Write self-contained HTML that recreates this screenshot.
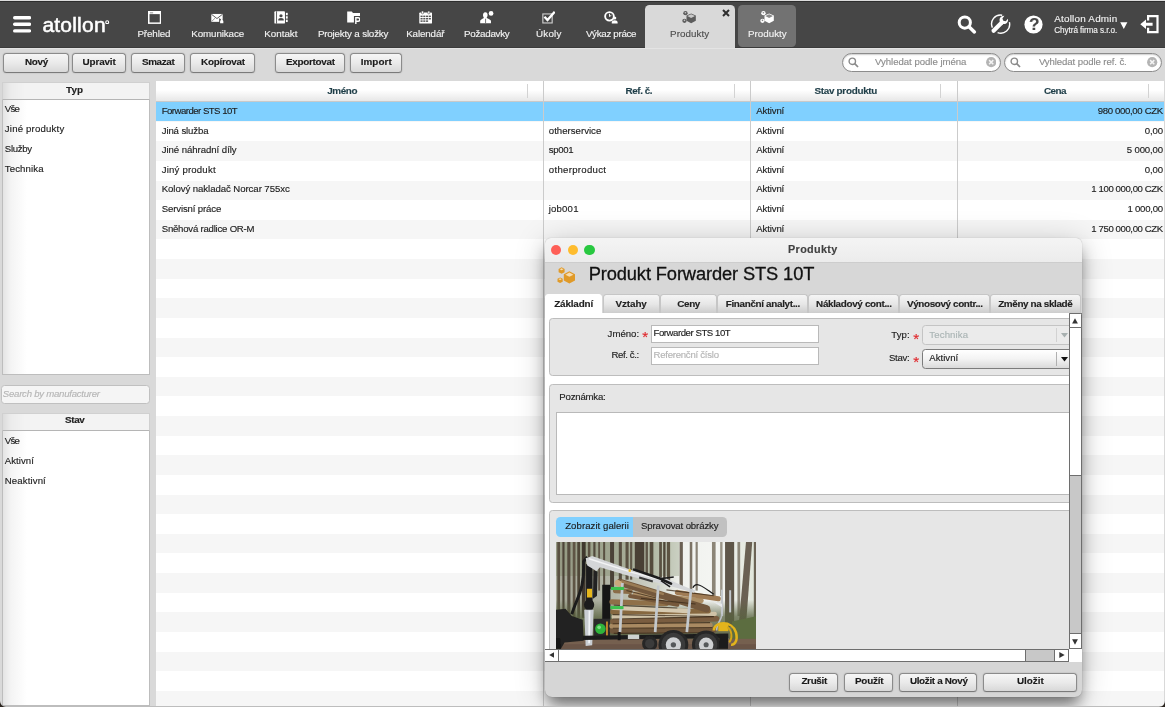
<!DOCTYPE html>
<html lang="cs">
<head>
<meta charset="utf-8">
<title>Atollon - Produkty</title>
<style>
*{box-sizing:border-box;margin:0;padding:0}
html,body{width:1165px;height:707px;overflow:hidden;background:#d9d9d9}
body{position:relative;font-family:"Liberation Sans",sans-serif;font-size:9.6px;color:#1c1c1c}
#app{position:absolute;left:0;top:0;width:1165px;height:707px;will-change:transform}
.abs{position:absolute}
.t{position:absolute;white-space:pre;line-height:1;font-style:normal;font-weight:normal;text-decoration:none;-webkit-text-stroke:0.14px}
#hdr{position:absolute;left:0;top:0;width:1165px;height:47.5px;background:linear-gradient(#dcdcdc 0,#dcdcdc 1px,#2d2d2d 1px,#2d2d2d 2px,#464646 2px);border-bottom:1px solid #3b3b3b}
#nav,#tools,#side,#user{position:absolute;left:0;top:0}
#nav svg,#user svg{position:absolute}
#tb{position:absolute;left:0;top:47.5px;width:1165px;height:34.2px;background:#d9d9d9;border-top:1px solid #e4e4e4}
.btn{position:absolute;height:20px;border:1px solid #8b8b8b;border-bottom-color:#7a7a7a;border-radius:3.5px;background:linear-gradient(#f6f6f6,#eaeaea 50%,#d8d8d8);box-shadow:0 0 1.5px rgba(0,0,0,.25)}
.sb{position:absolute;top:52.7px;height:19.2px;background:#fff;border:1px solid #8c8c8c;border-radius:9.6px;box-shadow:inset 0 1px 1.5px rgba(0,0,0,.2)}
.sb svg{position:absolute}
.ph{position:absolute;left:1.8px;width:148px;background:linear-gradient(90deg,#dcdcdc,#ececec 8px,#f3f3f3 22px);border:1px solid #d0d0d0;border-bottom:1px solid #b5b5b5}
.pl{position:absolute;left:1.8px;width:148px;background:linear-gradient(90deg,#e4e4e4,#f4f4f4 8px,#fff 24px);border:1px solid #bdbdbd;border-top:none}
#grid{position:absolute;left:155.8px;top:81.4px;width:1007.8px;height:626px;overflow:hidden;background:#fff}
#gh{position:absolute;left:0;top:0;width:100%;height:20.4px;background:linear-gradient(#fff,#fff 45%,#e7e7e7);border-bottom:1px solid #c9c9c9}
#rows{position:absolute;left:0;top:20.4px;width:100%;height:610px;background:repeating-linear-gradient(#f6f6f6 0,#f6f6f6 19.63px,#fff 19.63px,#fff 39.26px)}
.sel{position:absolute;left:0;top:0;width:100%;height:19.63px;background:#80d0ff}
.vl{position:absolute;top:0;width:1px;height:100%;background:#cbcbcb}
.sep{position:absolute;top:3px;width:1px;height:14px;background:#d3d3d3}
#dlg{position:absolute;left:544.8px;top:237.8px;width:536.8px;height:459.4px;background:#d6d6d6;border-radius:6px 6px 7px 7px;box-shadow:0 10px 15px -3px rgba(0,0,0,.5),0 4px 32px rgba(0,0,0,.2),0 0 1px rgba(0,0,0,.3)}
#dlgi{position:absolute;left:0;top:0;width:100%;height:100%;border-radius:6px 6px 7px 7px;overflow:hidden}
#dt{position:absolute;left:0;top:0;width:100%;height:25.2px;background:linear-gradient(#f4f4f4,#ececec);border-bottom:1px solid #cdcdcd}
#dt i{position:absolute;top:7.2px;width:10.3px;height:10.3px;border-radius:50%}
#dh{position:absolute;left:0;top:25.2px;width:100%;height:31.2px;background:#d7d7d7}
#tabs{position:absolute;left:0;top:56px;width:100%;height:19.2px}
#tabs b{position:absolute;top:0;height:19.2px;border:1px solid #c6c6c6;border-bottom:none;border-radius:3.5px 3.5px 0 0;background:linear-gradient(#f5f5f5,#e7e7e7 50%,#cdcdcd)}
#tabs b.on{background:#fff;border-color:#fff}
#dc{position:absolute;left:0;top:75.2px;width:524.5px;height:336.2px;background:#fff;overflow:hidden}
.pn{position:absolute;left:4.2px;width:560px;background:#e6e6e6;border:1px solid #bdbdbd;border-radius:3.5px}
.in{position:absolute;background:#fff;border:1px solid #b9b9b9}
.cb{position:absolute;width:170px;border:1px solid #7c7c7c;border-radius:3.5px;background:linear-gradient(#fff,#f3f3f3 50%,#dadada)}
.cb u{position:absolute;left:133.2px;top:2px;bottom:2px;width:1px;background:#b0b0b0}
.cb svg{position:absolute;left:138.4px;top:7.2px}
.tg{position:absolute;top:7.4px;height:19.8px}
.sc{position:absolute;background:#fff;border:1px solid #6e6e6e}
</style>
</head>
<body>
<div id="app">
<div id="hdr"></div>
<div class="abs" style="left:644.7px;top:5.2px;width:90.4px;height:44px;background:#d9d9d9;border-radius:4.5px 4.5px 0 0"></div>
<div class="abs" style="left:738.3px;top:5.2px;width:57.8px;height:41.6px;background:#727272;border-radius:4.5px"></div>
<div id="nav">
<svg class="abs" style="left:13.2px;top:16.1px" width="18.2" height="16.8" viewBox="0 0 18.2 16.8"><g fill="#fff"><rect x="0" y="0" width="18.2" height="3.4" rx="1.7"/><rect x="0" y="6.6" width="18.2" height="3.4" rx="1.7"/><rect x="0" y="13.2" width="18.2" height="3.4" rx="1.7"/></g></svg>
<span class="t" style="left:42.40px;top:13.92px;font-size:21.0px;letter-spacing:0.218px;color:#fff;-webkit-text-stroke:0.55px #fff;">atollon</span><svg class="abs" style="left:105.2px;top:19.8px" width="4.4" height="4.4" viewBox="0 0 4.4 4.4"><circle cx="2.2" cy="2.2" r="1.45" fill="none" stroke="#fff" stroke-width="1.1"/></svg>
<svg class="abs" style="left:147.6px;top:11.0px" width="13.3" height="12.9" viewBox="0 0 14 14" preserveAspectRatio="none"><rect x="0.8" y="0.8" width="12.4" height="12.4" fill="none" stroke="#fff" stroke-width="1.6"/><rect x="0.8" y="0.8" width="12.4" height="2.6" fill="#fff"/><rect x="2" y="1.6" width="3.4" height="0.9" fill="#777"/></svg><span class="t" style="left:137.41px;top:28.70px;font-size:9.8px;letter-spacing:-0.101px;color:#f2f2f2;">Přehled</span>
<svg class="abs" style="left:210.6px;top:11.0px" width="13.3" height="12.9" viewBox="0 0 14 14" preserveAspectRatio="none"><rect x="0.3" y="3.2" width="12" height="8.6" fill="#fff"/><path d="M0.3 3.4 L6.3 8.2 L12.3 3.4" fill="none" stroke="#555" stroke-width="1"/><path d="M0.5 11.6 L4.6 7.4 M12.1 11.6 L8 7.4" stroke="#777" stroke-width="0.8"/><rect x="8.6" y="8.6" width="5.2" height="5" fill="#474747"/><path d="M9.6 13.4 v-2.2 a1.7 1.7 0 0 1 3.4 0 v2.2z" fill="#fff"/><circle cx="11.3" cy="9.2" r="1" fill="#fff"/></svg><span class="t" style="left:191.21px;top:28.70px;font-size:9.8px;letter-spacing:-0.105px;color:#f2f2f2;">Komunikace</span>
<svg class="abs" style="left:273.8px;top:11.0px" width="14.2" height="12.9" viewBox="0 0 15 14" preserveAspectRatio="none"><rect x="0.4" y="0.3" width="11.2" height="13.4" rx="1" fill="#fff"/><rect x="2.3" y="0.3" width="0.9" height="13.4" fill="#474747"/><circle cx="7.4" cy="5.2" r="1.7" fill="#474747"/><path d="M4.4 10.2 a3 2.6 0 0 1 6 0z" fill="#474747"/><rect x="12.6" y="2" width="1.9" height="2.6" fill="#fff"/><rect x="12.6" y="5.7" width="1.9" height="2.6" fill="#fff"/><rect x="12.6" y="9.4" width="1.9" height="2.6" fill="#fff"/></svg><span class="t" style="left:264.21px;top:28.70px;font-size:9.8px;letter-spacing:0.007px;color:#f2f2f2;">Kontakt</span>
<svg class="abs" style="left:346.6px;top:11.0px" width="13.3" height="12.9" viewBox="0 0 14 14" preserveAspectRatio="none"><path d="M0.2 0.6 h4.8 l1.3 1.6 h7.4 v3.2 h-6.4 v7 h-7.1z" fill="#fff"/><path d="M9.3 14 v-6.7 h2.3 a1.95 1.95 0 0 1 0 3.9 h-2" fill="none" stroke="#fff" stroke-width="1.5"/></svg><span class="t" style="left:317.91px;top:28.70px;font-size:9.8px;letter-spacing:-0.184px;color:#f2f2f2;">Projekty a složky</span>
<svg class="abs" style="left:418.6px;top:11.0px" width="13.3" height="12.9" viewBox="0 0 14 14" preserveAspectRatio="none"><rect x="0.3" y="1.6" width="13.4" height="12.1" rx="0.8" fill="#fff"/><rect x="2.6" y="0.1" width="2.2" height="3" rx="0.9" fill="#fff" stroke="#474747" stroke-width="0.6"/><rect x="9.2" y="0.1" width="2.2" height="3" rx="0.9" fill="#fff" stroke="#474747" stroke-width="0.6"/><g fill="#555"><rect x="1.6" y="5" width="2.2" height="1.6"/><rect x="4.5" y="5" width="2.2" height="1.6"/><rect x="7.4" y="5" width="2.2" height="1.6"/><rect x="10.3" y="5" width="2.2" height="1.6"/><rect x="1.6" y="7.6" width="2.2" height="1.6"/><rect x="4.5" y="7.6" width="2.2" height="1.6"/><rect x="7.4" y="7.6" width="2.2" height="1.6"/><rect x="10.3" y="7.6" width="2.2" height="1.6"/><rect x="1.6" y="10.2" width="2.2" height="1.6"/><rect x="4.5" y="10.2" width="2.2" height="1.6"/><rect x="7.4" y="10.2" width="2.2" height="1.6"/></g></svg><span class="t" style="left:406.21px;top:28.70px;font-size:9.8px;letter-spacing:-0.135px;color:#f2f2f2;">Kalendář</span>
<svg class="abs" style="left:479.8px;top:11.0px" width="14.2" height="12.9" viewBox="0 0 15 14" preserveAspectRatio="none"><circle cx="11.7" cy="2.6" r="2.5" fill="#fff"/><path d="M5.6 1.4 c2 0 2.6 1.8 2.4 3.4 c-0.2 1.4 -0.8 2.2 -1 2.8 c1.6 0.8 4.2 1.6 4.6 3 v2.6 h-11.4 v-2.6 c0.4 -1.4 2.6 -2.2 4 -3 c-0.4 -0.8 -0.9 -1.6 -1 -2.8 c-0.1 -1.8 0.6 -3.4 2.4 -3.4z" fill="#fff"/><path d="M5.9 8.4 v4.8" stroke="#474747" stroke-width="0.8"/></svg><span class="t" style="left:464.01px;top:28.70px;font-size:9.8px;letter-spacing:-0.270px;color:#f2f2f2;">Požadavky</span>
<svg class="abs" style="left:541.6px;top:11.0px" width="13.3" height="12.9" viewBox="0 0 14 14" preserveAspectRatio="none"><rect x="0.9" y="3.2" width="9.8" height="9.8" fill="none" stroke="#cfcfcf" stroke-width="1.2"/><path d="M2.6 6.2 L5.8 9.8 L13.4 0.8" fill="none" stroke="#fff" stroke-width="2.4"/></svg><span class="t" style="left:536.11px;top:28.70px;font-size:9.8px;letter-spacing:0.169px;color:#f2f2f2;">Úkoly</span>
<svg class="abs" style="left:603.8px;top:11.0px" width="14.2" height="12.9" viewBox="0 0 15 14" preserveAspectRatio="none"><circle cx="5.8" cy="5.8" r="4.6" fill="none" stroke="#fff" stroke-width="2"/><path d="M5.8 3 v3 l2 -1.4" fill="none" stroke="#fff" stroke-width="1"/><circle cx="11.3" cy="7.6" r="1.7" fill="#fff"/><path d="M8.2 13.6 v-1.2 c0 -1.5 1.4 -2.4 3.1 -2.4 s3.1 0.9 3.1 2.4 v1.2z" fill="#fff"/></svg><span class="t" style="left:585.91px;top:28.70px;font-size:9.8px;letter-spacing:-0.325px;color:#f2f2f2;">Výkaz práce</span>
<svg class="abs" style="left:682.3px;top:11.0px" width="14.3" height="12.9" viewBox="0 0 15 14" preserveAspectRatio="none"><g fill="#5c5c5c"><circle cx="3.6" cy="2.4" r="2.3"/><circle cx="2.6" cy="10.6" r="2.3"/><path d="M9.6 2.6 l4.9 2.4 v5.6 l-4.9 2.8 l-4.9 -2.8 v-5.6z"/></g><path d="M5.6 5.5 l4 2 l4 -2 l-4 -1.9z" fill="#c9c9c9"/><circle cx="3.6" cy="1.9" r="0.9" fill="#c9c9c9"/><circle cx="2.6" cy="10.1" r="0.9" fill="#c9c9c9"/></svg><span class="t" style="left:670.11px;top:28.70px;font-size:9.8px;letter-spacing:0.043px;color:#4e4e4e;">Produkty</span>
<svg class="abs" style="left:759.9px;top:11.0px" width="14.3" height="12.9" viewBox="0 0 15 14" preserveAspectRatio="none"><g fill="#fff"><circle cx="3.6" cy="2.4" r="2.3"/><circle cx="2.6" cy="10.6" r="2.3"/><path d="M9.6 2.6 l4.9 2.4 v5.6 l-4.9 2.8 l-4.9 -2.8 v-5.6z"/></g><path d="M5.6 5.5 l4 2 l4 -2 l-4 -1.9z" fill="#8a8a8a"/><circle cx="3.6" cy="1.9" r="0.9" fill="#8a8a8a"/><circle cx="2.6" cy="10.1" r="0.9" fill="#8a8a8a"/></svg><span class="t" style="left:747.91px;top:28.70px;font-size:9.8px;letter-spacing:0.029px;color:#f2f2f2;">Produkty</span>
<svg class="abs" style="left:722.4px;top:9.2px" width="8" height="8" viewBox="0 0 8 8"><path d="M1 1 L7 7 M7 1 L1 7" stroke="#2e2e2e" stroke-width="2"/></svg>
</div>
<div id="user">
<svg class="abs" style="left:956.6px;top:14.6px" width="20" height="20" viewBox="0 0 20 20"><circle cx="7.8" cy="7.6" r="5.6" fill="none" stroke="#fff" stroke-width="3"/><path d="M12 11.8 L17.4 16.9" stroke="#fff" stroke-width="3.5" stroke-linecap="round"/></svg>
<svg class="abs" style="left:989.5px;top:14.4px" width="21" height="20" viewBox="0 0 21 20"><path d="M2.4 13.6 A8.9 8.9 0 0 1 12.2 1.2" fill="none" stroke="#fff" stroke-width="1.4"/><path d="M19.4 8.2 A8.9 8.9 0 0 1 7.6 18.6" fill="none" stroke="#fff" stroke-width="1.4"/><path d="M3.6 16.8 L11.6 8.8" stroke="#fff" stroke-width="4.2" stroke-linecap="round"/><path d="M9.8 7.2 c-0.9 -2.6 1.2 -5.6 4.6 -5.4 l-2 2.6 l0.9 2.3 l2.5 0.5 l2.1 -2.5 c0.9 3.2 -1.9 5.9 -5 5.2 z" fill="#fff"/></svg>
<svg class="abs" style="left:1023.8px;top:14.8px" width="19" height="19" viewBox="0 0 19 19"><circle cx="9.5" cy="9.5" r="9.1" fill="#fff"/></svg><span class="t" style="left:1029.00px;top:16.04px;font-size:17.2px;font-weight:bold;letter-spacing:-1.800px;color:#474747;">?</span>
<span class="t" style="left:1054.21px;top:13.72px;font-size:9.9px;letter-spacing:0.216px;color:#f2f2f2;">Atollon Admin</span><span class="t" style="left:1054.31px;top:27.36px;font-size:8.2px;letter-spacing:-0.090px;color:#f2f2f2;">Chytrá firma s.r.o.</span>
<svg class="abs" style="left:1120.4px;top:21.6px" width="8" height="8" viewBox="0 0 8 8"><path d="M0.2 0.2 h7.2 l-3.6 6.9z" fill="#fff"/></svg>
<svg class="abs" style="left:1139.5px;top:15px" width="20" height="19" viewBox="0 0 20 19"><path d="M8.1 5.6 V1.2 H17.5 V17.2 H8.1 V12.8" fill="none" stroke="#fff" stroke-width="2.2"/><path d="M0.3 9.2 L6 4.4 V7.7 H12.6 V10.7 H6 V14z" fill="#fff"/></svg>
</div>
<div id="tb"></div>
<div id="tools">
<div class="btn" style="left:2.5px;top:52.7px;width:66.4px"><span class="t" style="left:21.41px;top:2.82px;font-size:9.9px;font-weight:bold;letter-spacing:-0.256px;color:#1a1a1a;">Nový</span></div>
<div class="btn" style="left:72.3px;top:52.7px;width:53.4px"><span class="t" style="left:9.21px;top:2.82px;font-size:9.9px;font-weight:bold;letter-spacing:-0.124px;color:#1a1a1a;">Upravit</span></div>
<div class="btn" style="left:131.2px;top:52.7px;width:53.4px"><span class="t" style="left:9.81px;top:2.82px;font-size:9.9px;font-weight:bold;letter-spacing:-0.378px;color:#1a1a1a;">Smazat</span></div>
<div class="btn" style="left:190.3px;top:52.7px;width:64.6px"><span class="t" style="left:9.71px;top:2.82px;font-size:9.9px;font-weight:bold;letter-spacing:-0.251px;color:#1a1a1a;">Kopírovat</span></div>
<div class="btn" style="left:275.2px;top:52.7px;width:69.6px"><span class="t" style="left:9.71px;top:2.82px;font-size:9.9px;font-weight:bold;letter-spacing:-0.267px;color:#1a1a1a;">Exportovat</span></div>
<div class="btn" style="left:350.2px;top:52.7px;width:51.8px"><span class="t" style="left:9.51px;top:2.82px;font-size:9.9px;font-weight:bold;letter-spacing:0.071px;color:#1a1a1a;">Import</span></div>
<div class="sb" style="left:842.1px;width:158.6px"><svg class="abs" style="left:5.3px;top:3.2px" width="11" height="11" viewBox="0 0 11 11"><circle cx="4.3" cy="4.3" r="3.2" fill="none" stroke="#8a8a8a" stroke-width="1.4"/><path d="M6.7 6.7 L10 10" stroke="#8a8a8a" stroke-width="1.7"/></svg><svg class="abs" style="left:142.5px;top:3.7px" width="10.4" height="10.4" viewBox="0 0 10.4 10.4"><circle cx="5.2" cy="5.2" r="5.1" fill="#b4b4b4"/><path d="M3.1 3.1 L7.3 7.3 M7.3 3.1 L3.1 7.3" stroke="#f4f4f4" stroke-width="1.5"/></svg><span class="t" style="left:31.82px;top:3.77px;font-size:9.6px;letter-spacing:-0.019px;color:#8c8c8c;">Vyhledat podle jména</span></div>
<div class="sb" style="left:1004.1px;width:158.1px"><svg class="abs" style="left:4.5px;top:3.2px" width="11" height="11" viewBox="0 0 11 11"><circle cx="4.3" cy="4.3" r="3.2" fill="none" stroke="#8a8a8a" stroke-width="1.4"/><path d="M6.7 6.7 L10 10" stroke="#8a8a8a" stroke-width="1.7"/></svg><svg class="abs" style="left:142.2px;top:3.7px" width="10.4" height="10.4" viewBox="0 0 10.4 10.4"><circle cx="5.2" cy="5.2" r="5.1" fill="#b4b4b4"/><path d="M3.1 3.1 L7.3 7.3 M7.3 3.1 L3.1 7.3" stroke="#f4f4f4" stroke-width="1.5"/></svg><span class="t" style="left:33.82px;top:3.77px;font-size:9.6px;letter-spacing:-0.092px;color:#8c8c8c;">Vyhledat podle ref. č.</span></div>
</div>
<div id="side">
<div class="ph" style="top:81.9px;height:17.8px"><span class="t" style="left:63.21px;top:1.62px;font-size:9.9px;font-weight:bold;letter-spacing:0.080px;color:#222;">Typ</span></div>
<div class="pl" style="top:99.7px;height:275.7px"><span class="t" style="left:2.02px;top:4.57px;font-size:9.6px;letter-spacing:-0.797px;color:#1c1c1c;">Vše</span><span class="t" style="left:2.02px;top:24.40px;font-size:9.6px;letter-spacing:0.199px;color:#1c1c1c;">Jiné produkty</span><span class="t" style="left:2.02px;top:44.23px;font-size:9.6px;letter-spacing:-0.289px;color:#1c1c1c;">Služby</span><span class="t" style="left:2.02px;top:64.06px;font-size:9.6px;letter-spacing:0.125px;color:#1c1c1c;">Technika</span></div>
<div class="abs" style="left:1.2px;top:384.9px;width:148.4px;height:19.2px;background:#f5f5f5;border:1px solid #c0c0c0;border-radius:3.5px"><span class="t" style="left:0.62px;top:2.97px;font-size:9.6px;font-style:italic;letter-spacing:-0.245px;color:#b5b5b5;">Search by manufacturer</span></div>
<div class="ph" style="top:413.2px;height:17.8px"><span class="t" style="left:62.21px;top:1.12px;font-size:9.9px;font-weight:bold;letter-spacing:-0.357px;color:#222;">Stav</span></div>
<div class="pl" style="top:431px;height:275px"><span class="t" style="left:2.02px;top:4.87px;font-size:9.6px;letter-spacing:-0.797px;color:#1c1c1c;">Vše</span><span class="t" style="left:2.02px;top:24.82px;font-size:9.6px;letter-spacing:0.043px;color:#1c1c1c;">Aktivní</span><span class="t" style="left:2.02px;top:44.77px;font-size:9.6px;letter-spacing:0.119px;color:#1c1c1c;">Neaktivní</span></div>
</div>
<div id="grid">
<div id="gh"><span class="t" style="left:171.51px;top:4.32px;font-size:9.9px;font-weight:bold;letter-spacing:-0.414px;color:#1f3e48;">Jméno</span><span class="t" style="left:469.81px;top:4.32px;font-size:9.9px;font-weight:bold;letter-spacing:-0.459px;color:#1f3e48;">Ref. č.</span><span class="t" style="left:658.61px;top:4.32px;font-size:9.9px;font-weight:bold;letter-spacing:-0.284px;color:#1f3e48;">Stav produktu</span><span class="t" style="left:888.21px;top:4.32px;font-size:9.9px;font-weight:bold;letter-spacing:-0.556px;color:#1f3e48;">Cena</span><div class="sep" style="left:371.4px"></div><div class="sep" style="left:578.6px"></div><div class="sep" style="left:784.6px"></div><div class="sep" style="left:991.8px"></div></div>
<div id="rows"><div class="sel"></div>
<span class="t" style="left:5.92px;top:4.27px;font-size:9.6px;letter-spacing:-0.519px;color:#1c1c1c;">Forwarder STS 10T</span><span class="t" style="left:600.52px;top:4.27px;font-size:9.6px;letter-spacing:-0.141px;color:#1c1c1c;">Aktivní</span><span class="t" style="left:942.02px;top:4.27px;font-size:9.6px;letter-spacing:-0.348px;color:#1c1c1c;">980 000,00 CZK</span>
<span class="t" style="left:5.92px;top:23.87px;font-size:9.6px;letter-spacing:-0.115px;color:#1c1c1c;">Jiná služba</span><span class="t" style="left:393.02px;top:23.87px;font-size:9.6px;letter-spacing:0.017px;color:#1c1c1c;">otherservice</span><span class="t" style="left:600.52px;top:23.87px;font-size:9.6px;letter-spacing:-0.141px;color:#1c1c1c;">Aktivní</span><span class="t" style="left:988.92px;top:23.87px;font-size:9.6px;letter-spacing:-0.079px;color:#1c1c1c;">0,00</span>
<span class="t" style="left:5.92px;top:43.47px;font-size:9.6px;letter-spacing:-0.046px;color:#1c1c1c;">Jiné náhradní díly</span><span class="t" style="left:393.02px;top:43.47px;font-size:9.6px;letter-spacing:-0.347px;color:#1c1c1c;">sp001</span><span class="t" style="left:600.52px;top:43.47px;font-size:9.6px;letter-spacing:-0.141px;color:#1c1c1c;">Aktivní</span><span class="t" style="left:970.92px;top:43.47px;font-size:9.6px;letter-spacing:-0.130px;color:#1c1c1c;">5 000,00</span>
<span class="t" style="left:5.92px;top:63.07px;font-size:9.6px;letter-spacing:0.193px;color:#1c1c1c;">Jiný produkt</span><span class="t" style="left:393.02px;top:63.07px;font-size:9.6px;letter-spacing:0.298px;color:#1c1c1c;">otherproduct</span><span class="t" style="left:600.52px;top:63.07px;font-size:9.6px;letter-spacing:-0.141px;color:#1c1c1c;">Aktivní</span><span class="t" style="left:988.92px;top:63.07px;font-size:9.6px;letter-spacing:-0.079px;color:#1c1c1c;">0,00</span>
<span class="t" style="left:5.92px;top:82.67px;font-size:9.6px;letter-spacing:-0.057px;color:#1c1c1c;">Kolový nakladač Norcar 755xc</span><span class="t" style="left:600.52px;top:82.67px;font-size:9.6px;letter-spacing:-0.141px;color:#1c1c1c;">Aktivní</span><span class="t" style="left:935.52px;top:82.67px;font-size:9.6px;letter-spacing:-0.402px;color:#1c1c1c;">1 100 000,00 CZK</span>
<span class="t" style="left:5.92px;top:102.27px;font-size:9.6px;letter-spacing:-0.137px;color:#1c1c1c;">Servisní práce</span><span class="t" style="left:393.02px;top:102.27px;font-size:9.6px;letter-spacing:0.168px;color:#1c1c1c;">job001</span><span class="t" style="left:600.52px;top:102.27px;font-size:9.6px;letter-spacing:-0.141px;color:#1c1c1c;">Aktivní</span><span class="t" style="left:971.62px;top:102.27px;font-size:9.6px;letter-spacing:-0.230px;color:#1c1c1c;">1 000,00</span>
<span class="t" style="left:5.92px;top:121.87px;font-size:9.6px;letter-spacing:-0.221px;color:#1c1c1c;">Sněhová radlice OR-M</span><span class="t" style="left:600.52px;top:121.87px;font-size:9.6px;letter-spacing:-0.141px;color:#1c1c1c;">Aktivní</span><span class="t" style="left:935.52px;top:121.87px;font-size:9.6px;letter-spacing:-0.402px;color:#1c1c1c;">1 750 000,00 CZK</span>
</div>
<div class="vl" style="left:387.6px"></div><div class="vl" style="left:594.4px"></div><div class="vl" style="left:801.4px"></div>
</div>
<div id="dlg"><div id="dlgi">
<div id="dt"><i style="left:6.2px;background:#fe5f57"></i><i style="left:23.1px;background:#febc2e"></i><i style="left:39.7px;background:#28c840"></i><span class="t" style="left:243.25px;top:6.36px;font-size:10.8px;font-weight:bold;letter-spacing:0.343px;color:#404040;">Produkty</span></div>
<div id="dh"><svg class="abs" style="left:12.4px;top:3.6px" width="19" height="17" viewBox="0 0 19 17"><g fill="#e09a28"><path d="M4.6 0.3 l3 1.6 v3.3 l-3 1.6 l-3 -1.6 v-3.3z"/><path d="M3.1 10.4 l2.6 1.4 v2.9 l-2.6 1.4 l-2.6 -1.4 v-2.9z"/><path d="M12.4 4.2 l5.6 3 v6.2 l-5.6 3 l-5.6 -3 v-6.2z"/></g><g fill="#f8dcae"><path d="M4.6 1.3 l1.9 1 l-1.9 1 l-1.9 -1z"/><path d="M3.1 11.3 l1.6 0.9 l-1.6 0.9 l-1.6 -0.9z"/><path d="M12.4 5.6 l4 2.1 l-4 2.1 l-4 -2.1z"/></g></svg><span class="t" style="left:43.90px;top:1.61px;font-size:18.3px;letter-spacing:-0.121px;color:#111;-webkit-text-stroke:0.3px;">Produkt Forwarder STS 10T</span></div>
<div id="tabs"><b class=on style="left:0px;width:57.6px"><span class="t" style="left:8.41px;top:3.72px;font-size:9.9px;font-weight:bold;letter-spacing:-0.153px;color:#222;">Základní</span></b><b style="left:57.9px;width:57px"><span class="t" style="left:11.81px;top:3.72px;font-size:9.9px;font-weight:bold;letter-spacing:-0.091px;color:#222;">Vztahy</span></b><b style="left:115.2px;width:57px"><span class="t" style="left:16.31px;top:3.72px;font-size:9.9px;font-weight:bold;letter-spacing:-0.356px;color:#222;">Ceny</span></b><b style="left:172.5px;width:90.6px"><span class="t" style="left:7.41px;top:3.72px;font-size:9.9px;font-weight:bold;letter-spacing:-0.326px;color:#222;">Finanční analyt...</span></b><b style="left:263.4px;width:90.6px"><span class="t" style="left:6.91px;top:3.72px;font-size:9.9px;font-weight:bold;letter-spacing:-0.333px;color:#222;">Nákladový cont...</span></b><b style="left:354.3px;width:90.6px"><span class="t" style="left:6.91px;top:3.72px;font-size:9.9px;font-weight:bold;letter-spacing:-0.368px;color:#222;">Výnosový contr...</span></b><b style="left:445.2px;width:90.8px"><span class="t" style="left:7.21px;top:3.72px;font-size:9.9px;font-weight:bold;letter-spacing:-0.358px;color:#222;">Změny na skladě</span></b></div>
<div id="dc">
<div class="pn" style="top:5px;height:57.8px"><span class="t" style="left:57.62px;top:9.77px;font-size:9.6px;letter-spacing:0.017px;color:#1c1c1c;">Jméno:</span><span class="t" style="left:92.20px;top:9.70px;font-size:15px;letter-spacing:0.556px;color:#e0262a;">*</span><div class="in" style="left:101.3px;top:6.3px;width:167.4px;height:17.5px"><span class="t" style="left:1.22px;top:2.07px;font-size:9.6px;letter-spacing:-0.444px;color:#1c1c1c;">Forwarder STS 10T</span></div><span class="t" style="left:61.52px;top:31.07px;font-size:9.6px;letter-spacing:-0.391px;color:#1c1c1c;">Ref. č.:</span><div class="in" style="left:101.3px;top:28.3px;width:167.4px;height:17.5px"><span class="t" style="left:1.22px;top:1.77px;font-size:9.6px;letter-spacing:-0.252px;color:#b4b4b4;">Referenční číslo</span></div><span class="t" style="left:341.22px;top:10.87px;font-size:9.6px;letter-spacing:0.137px;color:#1c1c1c;">Typ:</span><span class="t" style="left:363.20px;top:11.70px;font-size:15px;letter-spacing:0.556px;color:#e0262a;">*</span><div class="cb" style="left:372.1px;top:6.3px;height:19.5px;background:#ebebeb;border-color:#c4c4c4"><u style="background:#d2d2d2"></u><svg width="7" height="5" viewBox="0 0 7 5"><path d="M0 0h7l-3.5 4.6z" fill="#a8b0b0"/></svg><span class="t" style="left:6.22px;top:3.77px;font-size:9.6px;letter-spacing:0.140px;color:#aab4b4;">Technika</span></div><span class="t" style="left:338.92px;top:34.27px;font-size:9.6px;letter-spacing:-0.256px;color:#1c1c1c;">Stav:</span><span class="t" style="left:363.20px;top:34.70px;font-size:15px;letter-spacing:0.556px;color:#e0262a;">*</span><div class="cb" style="left:372.1px;top:30.1px;height:19.8px"><u></u><svg width="7" height="5" viewBox="0 0 7 5"><path d="M0 0h7l-3.5 4.6z" fill="#111"/></svg><span class="t" style="left:6.22px;top:3.37px;font-size:9.6px;letter-spacing:0.009px;color:#1c1c1c;">Aktivní</span></div></div>
<div class="pn" style="top:70.6px;height:119.2px"><span class="t" style="left:9.32px;top:7.87px;font-size:9.6px;letter-spacing:-0.193px;color:#1c1c1c;">Poznámka:</span><div class="in" style="left:6.3px;top:27.7px;width:540px;height:82.4px"></div></div>
<div class="pn" style="top:196.6px;height:160px"><div class="tg" style="left:6.1px;top:6.4px;width:77px;background:#80d0ff;border-radius:4.5px 0 0 4.5px"><span class="t" style="left:9.12px;top:4.27px;font-size:9.6px;letter-spacing:0.055px;color:#1c1c1c;">Zobrazit galerii</span></div><div class="tg" style="left:83.1px;top:6.4px;width:94.2px;background:#c1c1c1;border-radius:0 4.5px 4.5px 0"><span class="t" style="left:7.92px;top:4.27px;font-size:9.6px;letter-spacing:-0.119px;color:#1c1c1c;">Spravovat obrázky</span></div><svg class="abs" style="left:6.0px;top:31.4px" width="200" height="107.2" viewBox="0 0 200 107.2" preserveAspectRatio="none"><defs><linearGradient id="pbg" x1="0" x2="1" y1="0" y2="0"><stop offset="0" stop-color="#a3a595"/><stop offset="0.3" stop-color="#b4b7a8"/><stop offset="0.5" stop-color="#d0d3c8"/><stop offset="0.62" stop-color="#f0f2ee"/><stop offset="0.8" stop-color="#f4f5f2"/><stop offset="1" stop-color="#dfe4d8"/></linearGradient><linearGradient id="pgr" x1="0" x2="0" y1="0" y2="1"><stop offset="0" stop-color="#58623f" stop-opacity="0"/><stop offset="0.35" stop-color="#58623f" stop-opacity="0.75"/><stop offset="1" stop-color="#55583a"/></linearGradient><filter id="pbl" x="-2%" y="-2%" width="104%" height="104%"><feGaussianBlur stdDeviation="0.45"/></filter><clipPath id="pcl"><rect x="0" y="0" width="200" height="107.2"/></clipPath></defs><g clip-path="url(#pcl)"><g filter="url(#pbl)"><rect x="-2" y="-2" width="204" height="112" fill="url(#pbg)"/><rect x="-2" y="-2" width="125" height="36" fill="#6f7d55" opacity="0.28"/><rect x="1.27" y="-2" width="2.73" height="77.89" fill="#5a5142"/><rect x="6.37" y="-2" width="2.18" height="77.89" fill="#4d4538"/><rect x="11.28" y="-2" width="3.09" height="77.89" fill="#574d40"/><rect x="16.74" y="-2" width="2.73" height="77.89" fill="#5e5445"/><rect x="21.29" y="-2" width="2.73" height="77.89" fill="#4f4739"/><rect x="25.84" y="-2" width="3.82" height="77.89" fill="#3f382e"/><rect x="31.85" y="-2" width="2.55" height="50.59" fill="#5a5142"/><rect x="37.31" y="-2" width="2.18" height="50.59" fill="#51483b"/><rect x="42.22" y="-2" width="1.82" height="50.59" fill="#5e5546"/><rect x="47.13" y="-2" width="2.0" height="50.59" fill="#5a5142"/><rect x="54.05" y="-2" width="4.0" height="48.77" fill="#4b4337"/><rect x="62.78" y="-2" width="3.09" height="41.49" fill="#564d3f"/><rect x="69.52" y="-2" width="3.09" height="39.67" fill="#5a5142"/><rect x="74.07" y="-2" width="2.18" height="39.67" fill="#61584a"/><rect x="78.8" y="-2" width="9.46" height="35.12" fill="#4a4136"/><rect x="89.54" y="-2" width="2.37" height="37.85" fill="#5d5446"/><rect x="93.72" y="-2" width="3.64" height="38.76" fill="#544b3d"/><rect x="103.18" y="-2" width="2.73" height="41.49" fill="#5a5142"/><rect x="107.19" y="-2" width="2.37" height="42.4" fill="#4f4639"/><rect x="110.83" y="-2" width="3.28" height="43.31" fill="#5b5243"/><rect x="123.57" y="-2" width="3.28" height="47.86" fill="#6a6153"/><rect x="133.76" y="-2" width="2.55" height="50.59" fill="#7b7365"/><rect x="139.58" y="-2" width="2.18" height="50.59" fill="#8a8376"/><rect x="155.96" y="-2" width="3.64" height="56.05" fill="#8c8577"/><rect x="164.15" y="-2" width="2.37" height="56.05" fill="#9a9487"/><rect x="181.44" y="-2" width="2.73" height="76.07" fill="#8d8779"/><rect x="197.82" y="-2" width="2.73" height="81.53" fill="#6c6455"/><rect x="169.06" y="-2" width="9.1" height="86.99" fill="#5f564a"/><path d="M190.17 -2 L196.36 -2 L189.63 87.72 L182.35 87.72z" fill="#6a6152"/><rect x="-2" y="57.69" width="204" height="49.14" fill="url(#pgr)"/><path d="M175.98 79.53 L201.46 74.07 L201.46 99.55 L175.98 99.55z" fill="#5c6d40"/><rect x="-2" y="96.82" width="204" height="12.74" fill="#75604f"/><rect x="-2" y="102.27" width="204" height="7.28" fill="#6a5546"/><path d="M0.0 67.7 L9.46 66.79 L15.83 74.07 L26.75 77.71 L27.66 98.64 L8.55 100.45 L4.91 106.82 L0.0 106.82z" fill="#222220"/><path d="M0.0 95.91 L4.0 95.91 L4.91 106.82 L0.0 106.82z" fill="#141414"/><path d="M15.83 72.25 C21.29 54.05 28.57 48.59 27.66 19.47 L31.3 14.92" fill="none" stroke="#1c1c1c" stroke-width="2.91"/><rect x="30.03" y="22.2" width="6.55" height="45.5" fill="#1e1e1e"/><path d="M37.67 28.57 L41.67 29.48 L40.95 54.05 L36.94 56.78z" fill="#242424"/><rect x="30.94" y="46.77" width="5.1" height="8.74" fill="#e6b71e"/><ellipse cx="33.12" cy="62.78" rx="5.1" ry="5.46" fill="#1b1b1b"/><path d="M28.21 67.7 L37.67 67.7 L36.21 103.18 L29.66 104.09z" fill="#c9cdd2"/><path d="M32.58 68.61 L34.39 68.61 L34.03 101.36 L32.21 101.36z" fill="#f0f2f4"/><rect x="46.22" y="42.77" width="8.19" height="37.31" fill="#191919"/><rect x="37.67" y="76.8" width="16.38" height="18.2" fill="#2a2c2a"/><circle cx="44.4" cy="86.81" r="5.28" fill="#2fb53b"/><circle cx="43.13" cy="85.35" r="1.82" fill="#7fe088"/><rect x="50.05" y="79.53" width="1.82" height="16.38" fill="#c98b2a"/><path d="M56.78 88.63 L157.78 87.72" stroke="#6e553a" stroke-width="6.19" stroke-linecap="round"/><path d="M55.87 84.08 L154.14 83.17" stroke="#a98a62" stroke-width="5.1" stroke-linecap="round"/><path d="M56.78 79.53 L160.51 76.8" stroke="#7a5d3f" stroke-width="5.46" stroke-linecap="round"/><path d="M57.69 74.98 L158.69 71.88" stroke="#cfc2a6" stroke-width="4.37" stroke-linecap="round"/><path d="M56.78 70.06 L152.32 68.97" stroke="#86673f" stroke-width="5.1" stroke-linecap="round"/><path d="M57.69 65.88 L132.3 68.97" stroke="#d5c9b0" stroke-width="4.37" stroke-linecap="round"/><path d="M55.87 59.87 L110.46 61.69" stroke="#8f7049" stroke-width="5.1" stroke-linecap="round"/><path d="M79.53 52.23 L145.04 58.6" stroke="#ad8f66" stroke-width="5.46" stroke-linecap="round"/><path d="M121.38 50.41 L162.33 56.78" stroke="#a07c55" stroke-width="5.1" stroke-linecap="round"/><path d="M74.07 54.05 L121.38 62.78" stroke="#76593a" stroke-width="4.0" stroke-linecap="round"/><path d="M64.06 40.4 L150.5 66.79" stroke="#73583c" stroke-width="7.28" stroke-linecap="round"/><path d="M65.88 39.49 L106.82 51.87" stroke="#9a7c55" stroke-width="2.55" stroke-linecap="round"/><path d="M59.51 48.59 L74.07 49.5" stroke="#8a6c48" stroke-width="5.1" stroke-linecap="round"/><path d="M61.69 40.95 L63.15 41.67" stroke="#c9a97c" stroke-width="6.19" stroke-linecap="round"/><path d="M57.69 63.15 L121.38 66.06" stroke="#3a2a1a" stroke-width="1.09" opacity="0.75"/><path d="M56.78 72.61 L157.78 74.43" stroke="#3a2a1a" stroke-width="1.09" opacity="0.75"/><path d="M56.78 76.98 L157.78 74.8" stroke="#3a2a1a" stroke-width="1.09" opacity="0.75"/><path d="M56.78 81.71 L154.14 80.62" stroke="#3a2a1a" stroke-width="1.09" opacity="0.75"/><path d="M56.78 86.26 L155.96 85.53" stroke="#3a2a1a" stroke-width="1.09" opacity="0.75"/><path d="M84.99 56.41 L139.58 62.06" stroke="#3a2a1a" stroke-width="1.09" opacity="0.75"/><path d="M70.43 48.59 L103.18 56.78" stroke="#3a2a1a" stroke-width="1.09" opacity="0.75"/><path d="M110.46 47.86 L157.78 53.69" stroke="#3a2a1a" stroke-width="1.09" opacity="0.75"/><path d="M57.69 91.36 L157.78 90.81" stroke="#3a2a1a" stroke-width="1.09" opacity="0.75"/><path d="M29.66 16.2 L36.21 14.01 L76.8 28.57 L110.46 36.76 L134.12 46.77 L139.58 48.59 L137.76 50.77 L110.46 43.13 L72.25 33.67 L44.04 25.3 L40.4 28.94 L31.3 23.48z" fill="#d4d6d8"/><path d="M33.12 16.74 L75.89 30.39 L110.46 39.13" stroke="#f2f3f4" stroke-width="1.46" fill="none"/><path d="M78.07 27.66 L103.18 36.21 L115.01 41.67" stroke="#1c1c1c" stroke-width="2.55" fill="none" stroke-linecap="round"/><path d="M103.18 36.76 L117.74 34.94 M105.0 38.58 L114.1 44.95" stroke="#1c1c1c" stroke-width="1.46" fill="none"/><rect x="72.61" y="27.3" width="2.18" height="2.55" fill="#e6b71e"/><path d="M83.17 35.49 L96.82 39.49" stroke="#3a3a3a" stroke-width="2.18"/><path d="M136.85 45.86 C139.58 39.49 145.04 43.13 157.78 52.23" stroke="#1c1c1c" stroke-width="1.27" fill="none"/><path d="M66.42 40.95 L64.06 90.08" stroke="#c3c8cd" stroke-width="2.73"/><path d="M102.27 43.49 L99.18 90.08" stroke="#c3c8cd" stroke-width="2.73"/><path d="M135.03 46.77 L130.85 90.08" stroke="#c3c8cd" stroke-width="2.73"/><path d="M165.97 47.68 L165.97 74.07" stroke="#c3c8cd" stroke-width="2.18"/><path d="M174.16 48.23 L174.16 70.43" stroke="#c3c8cd" stroke-width="2.0"/><path d="M165.97 72.25 C165.06 79.53 160.51 81.35 160.51 88.63" stroke="#b9bec3" stroke-width="1.64" fill="none"/><path d="M156.87 59.87 L165.97 61.69 L165.97 65.33z" fill="#e8eaec"/><rect x="54.96" y="44.95" width="13.1" height="3.09" fill="#3dc24f"/><rect x="54.41" y="64.06" width="13.1" height="3.09" fill="#3dc24f"/><path d="M26.75 93.72 L172.34 91.54 L172.34 95.91 L26.75 98.09z" fill="#1f1f1f"/><rect x="61.69" y="90.08" width="2.91" height="8.19" fill="#161616"/><rect x="71.88" y="92.63" width="11.28" height="4.37" fill="#cfd2cf"/><circle cx="93.72" cy="101.73" r="7.64" fill="#262626"/><circle cx="93.72" cy="101.73" r="4.73" fill="#3a3a3a"/><circle cx="93.72" cy="101.73" r="0.0" fill="#cfd1d3"/><circle cx="93.72" cy="101.73" r="0.0" fill="#55585a"/><circle cx="117.38" cy="102.82" r="14.92" fill="#262626"/><circle cx="117.38" cy="102.82" r="12.01" fill="#3a3a3a"/><circle cx="117.38" cy="102.82" r="7.64" fill="#cfd1d3"/><circle cx="117.38" cy="102.82" r="2.68" fill="#55585a"/><circle cx="150.14" cy="102.82" r="14.19" fill="#262626"/><circle cx="150.14" cy="102.82" r="11.28" fill="#3a3a3a"/><circle cx="150.14" cy="102.82" r="7.28" fill="#cfd1d3"/><circle cx="150.14" cy="102.82" r="2.55" fill="#55585a"/><rect x="163.24" y="93.18" width="8.74" height="13.65" fill="#1c1c1c"/><path d="M157.78 88.63 C157.78 79.53 175.98 77.71 179.98 90.45 C182.35 99.55 177.8 103.18 175.07 102.82" stroke="#e3b41c" stroke-width="2.55" fill="none"/><rect x="162.33" y="80.98" width="10.01" height="8.19" fill="#e3b41c"/><path d="M171.43 84.99 C175.98 88.63 176.89 95.91 173.25 100.45" stroke="#d4a616" stroke-width="1.82" fill="none"/></g></g></svg></div>
</div>
<div class="sc" style="left:524.3px;top:75.6px;width:12.6px;height:336px"></div><div class="sc" style="left:524.3px;top:75.6px;width:12.6px;height:14.8px;border-radius:0 1.5px 0 0"></div><svg class="abs" style="left:527.6px;top:80.2px" width="6" height="5.8" viewBox="0 0 7 7" preserveAspectRatio="none"><path d="M3.5 0.2 L6.9 6.6 H0.1z" fill="#333"/></svg><div class="abs" style="left:525.3px;top:237px;width:10.6px;height:159.6px;background:#c8c8c8;border-top:1px solid #6e6e6e;border-bottom:1px solid #6e6e6e"></div><svg class="abs" style="left:527.6px;top:401.4px" width="6" height="5.8" viewBox="0 0 7 7" preserveAspectRatio="none"><path d="M3.5 6.8 L6.9 0.4 H0.1z" fill="#333"/></svg>
<div class="sc" style="left:0;top:411.4px;width:524.5px;height:12.4px;border-left:none"></div><div class="sc" style="left:0;top:411.4px;width:14.4px;height:12.4px;border-left:none"></div><svg class="abs" style="left:3.8px;top:414.6px" width="5.8" height="6" viewBox="0 0 7 7" preserveAspectRatio="none"><path d="M0.2 3.5 L6.6 0.1 V6.9z" fill="#333"/></svg><div class="abs" style="left:480.4px;top:412.4px;width:29.4px;height:10.4px;background:#c8c8c8;border-left:1px solid #6e6e6e;border-right:1px solid #6e6e6e"></div><svg class="abs" style="left:514.2px;top:414.6px" width="5.8" height="6" viewBox="0 0 7 7" preserveAspectRatio="none"><path d="M6.8 3.5 L0.4 0.1 V6.9z" fill="#333"/></svg><div class="abs" style="left:524.5px;top:411.6px;width:12.4px;height:12.2px;background:#fff"></div>
<div class="btn" style="left:244.3px;top:434.8px;width:49.1px;height:19.2px"><span class="t" style="left:11.31px;top:1.92px;font-size:9.9px;font-weight:bold;letter-spacing:-0.310px;color:#1a1a1a;">Zrušit</span></div><div class="btn" style="left:299.2px;top:434.8px;width:49.5px;height:19.2px"><span class="t" style="left:9.91px;top:1.92px;font-size:9.9px;font-weight:bold;letter-spacing:-0.187px;color:#1a1a1a;">Použít</span></div><div class="btn" style="left:354.2px;top:434.8px;width:78.3px;height:19.2px"><span class="t" style="left:9.91px;top:1.92px;font-size:9.9px;font-weight:bold;letter-spacing:-0.327px;color:#1a1a1a;">Uložit a Nový</span></div><div class="btn" style="left:438.5px;top:434.8px;width:93.4px;height:19.2px"><span class="t" style="left:32.71px;top:1.92px;font-size:9.9px;font-weight:bold;letter-spacing:-0.021px;color:#1a1a1a;">Uložit</span></div>
</div></div>
<div class="abs" style="left:0;top:705.9px;width:1165px;height:1.2px;background:#bdbdbd"></div><svg class="abs" style="left:0;top:0" width="1165" height="707" viewBox="0 0 1165 707"><path d="M0 707 V701 A6 6 0 0 0 6 707z M1165 707 V701 A6 6 0 0 1 1159 707z" fill="#2b251f"/></svg>
</div>
</body>
</html>
